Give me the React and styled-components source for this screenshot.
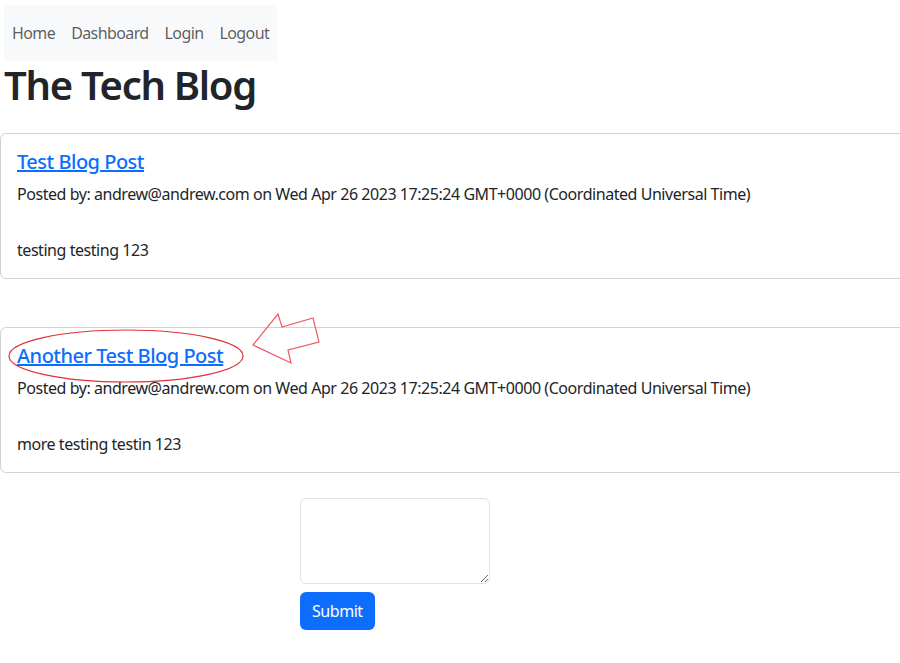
import styled, { createGlobalStyle } from "styled-components";

const GlobalStyle = createGlobalStyle`
  body {
    margin: 0;
    font-family: "Noto Sans", "Open Sans", sans-serif;
    font-size: 16px;
    line-height: 1.5;
    letter-spacing: -0.45px;
    color: #212529;
    background: #fff;
  }
`

const posts = [
  {
    title: "Test Blog Post",
    author: "andrew@andrew.com",
    date: "Wed Apr 26 2023 17:25:24 GMT+0000 (Coordinated Universal Time)",
    body: "testing testing 123",
  },
  {
    title: "Another Test Blog Post",
    author: "andrew@andrew.com",
    date: "Wed Apr 26 2023 17:25:24 GMT+0000 (Coordinated Universal Time)",
    body: "more testing testin 123",
    marked: true,
  },
]

export default function App() {
  return (
    <>
      <GlobalStyle />
      <Nav>
        <NavLink>Home</NavLink>
        <NavLink>Dashboard</NavLink>
        <NavLink>Login</NavLink>
        <NavLink>Logout</NavLink>
      </Nav>
      <Title>The Tech Blog</Title>
      <Posts>
        {posts.map((post, i) => (
          <Card key={i}>
            <PostTitle>
              <a href="#">{post.title}</a>
              {post.marked && <Annotation />}
            </PostTitle>
            <Meta>Posted by: {post.author} on {post.date}</Meta>
            <Body>{post.body}</Body>
          </Card>
        ))}
      </Posts>
      <Form>
        <TextArea />
        <SubmitButton>Submit</SubmitButton>
      </Form>
    </>
  );
}

function Annotation() {
  return (
    <Overlay width="340" height="70" viewBox="0 0 340 70">
      <ellipse cx="126" cy="42" rx="117" ry="26" fill="none" stroke="#e0303a" strokeWidth="1.2" />
      <polygon
        points="253,31 278,0 282,13 313,4 319,28 288,36 291,49"
        fill="none"
        stroke="#f05a62"
        strokeWidth="1.2"
        strokeLinejoin="miter"
      />
    </Overlay>
  )
}

const Nav = styled.nav`
  display: inline-flex;
  margin: 5px 0 0 4px;
  padding: 8px 0;
  background-color: #f8f9fa;
`

const NavLink = styled.a`
  padding: 8px;
  color: rgba(0, 0, 0, 0.65);
  text-decoration: none;
  letter-spacing: -0.6px;
  cursor: pointer;
`

const Title = styled.h1`
  margin: 0 0 24px 4px;
  font-size: 40px;
  font-weight: 600;
  line-height: 1.2;
  letter-spacing: -1.3px;
`

const Posts = styled.div`
  display: flex;
  flex-direction: column;
  gap: 48px;
  width: 1000px;
`

const Card = styled.div`
  border: 1px solid rgba(0, 0, 0, 0.175);
  border-radius: 6px;
  padding: 16px;
`

const PostTitle = styled.h5`
  position: relative;
  margin: 0 0 8px;
  font-size: 20px;
  font-weight: 500;
  line-height: 1.2;
  letter-spacing: -0.5px;
  a {
    color: #0d6efd;
    text-decoration: underline;
  }
`

const Overlay = styled.svg`
  position: absolute;
  left: -17px;
  top: -30px;
  overflow: visible;
  pointer-events: none;
`

const Meta = styled.p`
  margin: 0 0 32px;
`

const Body = styled.p`
  margin: 0;
`

const Form = styled.form`
  display: flex;
  flex-direction: column;
  align-items: flex-start;
  gap: 8px;
  margin: 25px 0 0 300px;
`

const TextArea = styled.textarea`
  width: 190px;
  height: 86px;
  box-sizing: border-box;
  border: 1px solid #dee2e6;
  border-radius: 6px;
  font-family: inherit;
  font-size: 16px;
`

const SubmitButton = styled.button`
  height: 38px;
  padding: 6px 12px;
  border: none;
  border-radius: 6px;
  background-color: #0d6efd;
  color: #fff;
  font-family: inherit;
  font-size: 16px;
  letter-spacing: inherit;
  cursor: pointer;
`
